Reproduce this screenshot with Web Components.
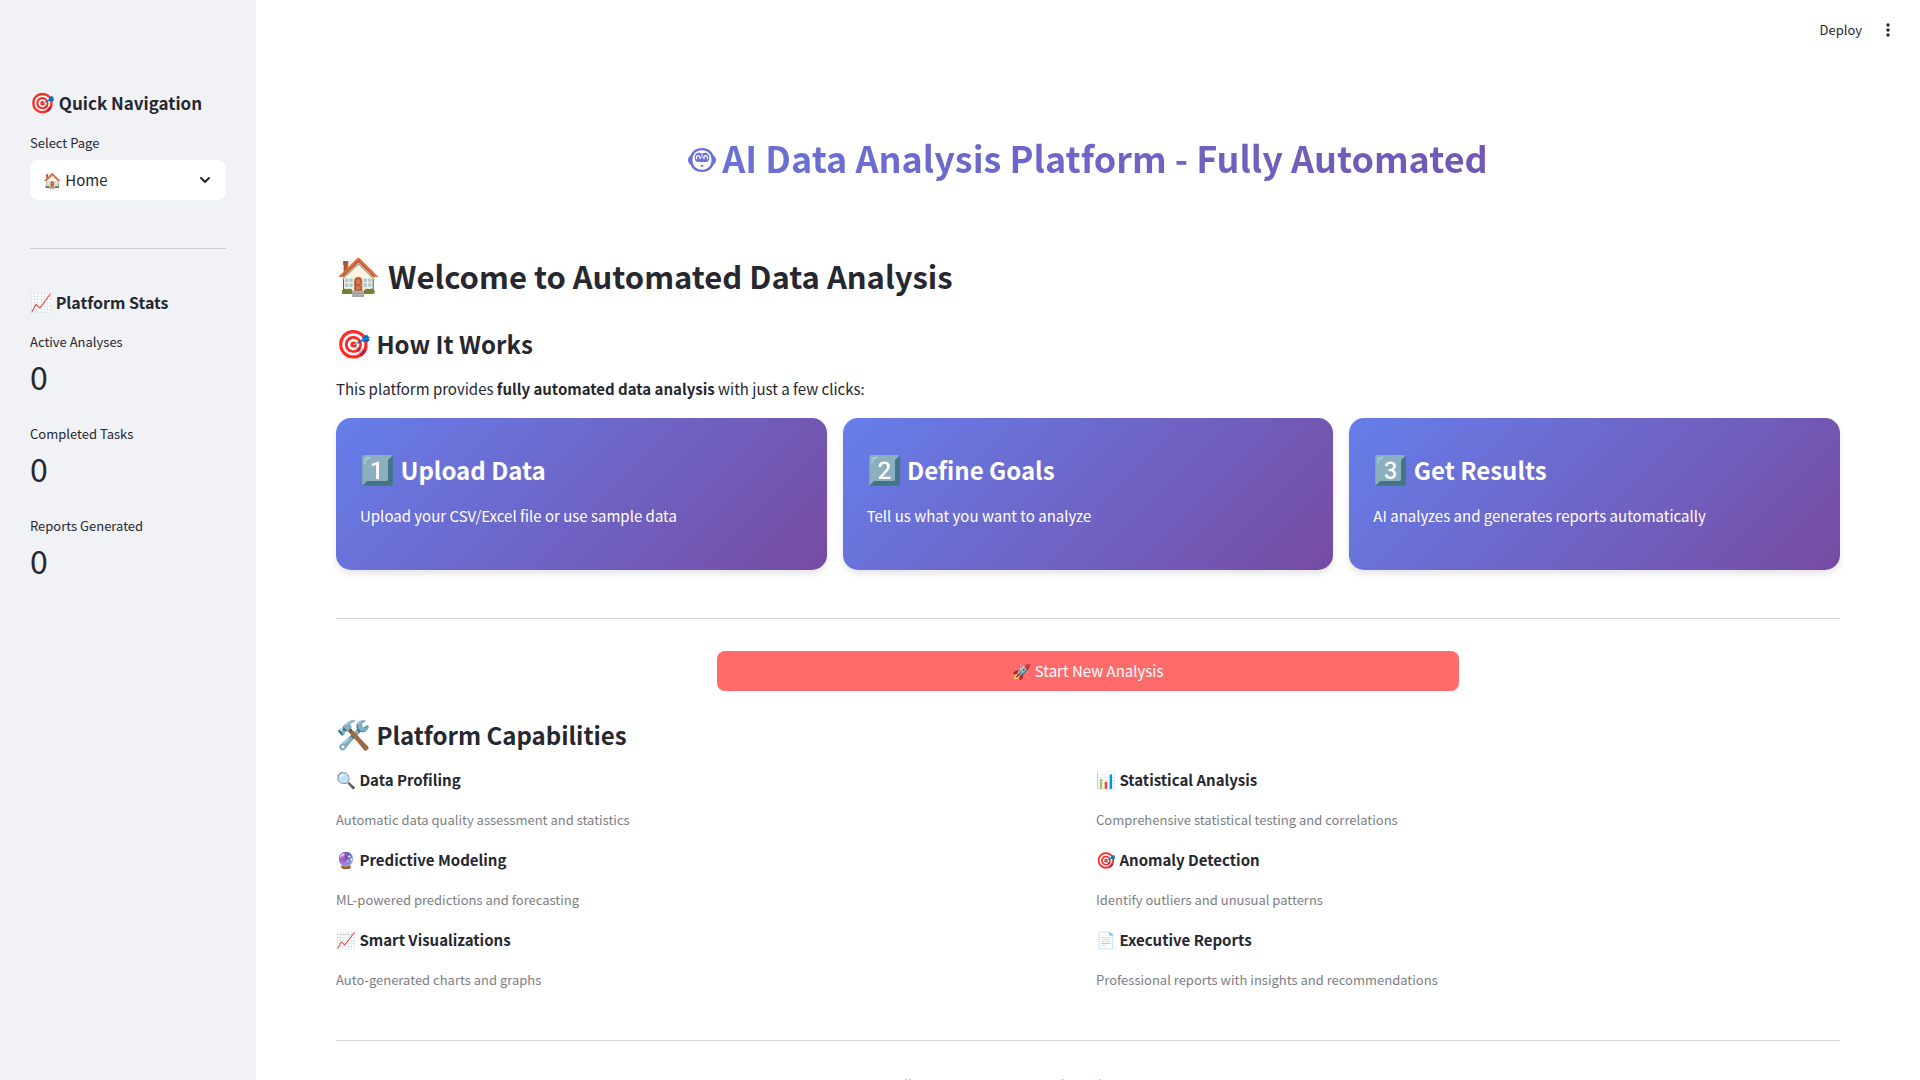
<!DOCTYPE html>
<html lang="en">
<head>
<meta charset="utf-8">
<title>AI Data Analysis Platform</title>
<style>
html, body { margin: 0; height: 100%; }
body { overflow: hidden; background: #fff; color: #262730; font-family: "Noto Sans CJK SC", sans-serif; font-size: 15px; line-height: 24px; }
</style>
</head>
<body>
<app-shell>
  <side-bar slot="side">
    <side-title icon="🎯" size="large">Quick Navigation</side-title>
    <page-picker></page-picker>
    <rule-line></rule-line>
    <side-title icon="📈">Platform Stats</side-title>
    <stat-metric label="Active Analyses">0</stat-metric>
    <stat-metric label="Completed Tasks">0</stat-metric>
    <stat-metric label="Reports Generated">0</stat-metric>
  </side-bar>
  <top-bar slot="top"></top-bar>
  <hero-title>AI Data Analysis Platform - Fully Automated</hero-title>
  <page-heading icon="🏠">Welcome to Automated Data Analysis</page-heading>
  <section-heading icon="🎯">How It Works</section-heading>
  <intro-text>This platform provides <strong>fully automated data analysis</strong> with just a few clicks:</intro-text>
  <step-row>
    <step-card icon="1️⃣" heading="Upload Data">Upload your CSV/Excel file or use sample data</step-card>
    <step-card icon="2️⃣" heading="Define Goals">Tell us what you want to analyze</step-card>
    <step-card icon="3️⃣" heading="Get Results">AI analyzes and generates reports automatically</step-card>
  </step-row>
  <rule-line></rule-line>
  <start-action></start-action>
  <section-heading icon="🛠️">Platform Capabilities</section-heading>
  <capability-grid>
    <capability-item icon="🔍" heading="Data Profiling">Automatic data quality assessment and statistics</capability-item>
    <capability-item icon="📊" heading="Statistical Analysis">Comprehensive statistical testing and correlations</capability-item>
    <capability-item icon="🔮" heading="Predictive Modeling">ML-powered predictions and forecasting</capability-item>
    <capability-item icon="🎯" heading="Anomaly Detection">Identify outliers and unusual patterns</capability-item>
    <capability-item icon="📈" heading="Smart Visualizations">Auto-generated charts and graphs</capability-item>
    <capability-item icon="📄" heading="Executive Reports">Professional reports with insights and recommendations</capability-item>
  </capability-grid>
  <rule-line></rule-line>
  <page-footer>Fully Automated AI Data Analysis Platform for Enterprise Research</page-footer>
</app-shell>
<script>
function define(name, render) {
  customElements.define(name, class extends HTMLElement {
    constructor() {
      super();
      const root = this.attachShadow({ mode: 'open' });
      const t = document.createElement('template');
      t.innerHTML = render(this);
      root.append(t.content.cloneNode(true));
    }
  });
}
const attr = (el, n) => el.getAttribute(n) || '';

define('app-shell', () => `
<style>
:host { display: flex; height: 100vh; overflow: hidden; }
.column { flex: 1; min-width: 0; display: flex; flex-direction: column; }
main { flex: 1; min-height: 0; overflow: hidden; padding: 73px 80px 0; }
</style>
<slot name="side"></slot>
<div class="column"><slot name="top"></slot><main><slot></slot></main></div>`);

define('side-bar', () => `
<style>
:host { display: block; flex: 0 0 256px; box-sizing: border-box; padding: 91px 30px 0; background: #f0f2f6; --rule: #c9cbd0; --rule-margin: 48px 0 41px; }
</style>
<slot></slot>`);

define('side-title', el => `
<style>
:host { display: block; margin-bottom: 18px; }
h3 { margin: 0; font-size: 16px; line-height: 24px; font-weight: 700; }
:host([size="large"]) h3 { font-size: 17px; }
.icon { font-size: 18px; line-height: 1px; }
:host([size="large"]) .icon { font-size: 20px; }
</style>
<h3><span class="icon">${attr(el, 'icon')}</span> <slot></slot></h3>`);

define('page-picker', () => `
<style>
:host { display: block; }
label { display: block; font-size: 13px; line-height: 20px; margin-bottom: 7px; }
.box { display: grid; align-items: center; height: 40px; }
select, svg { grid-area: 1 / 1; }
select { appearance: none; width: 100%; height: 40px; padding: 0 36px 0 13px; border: 0; border-radius: 8px; background: #fff; color: inherit; font: inherit; }
svg { justify-self: end; margin-right: 16px; pointer-events: none; }
</style>
<label for="page">Select Page</label>
<div class="box">
<select id="page"><option>🏠 Home</option></select>
<svg width="10" height="8" viewBox="0 0 10 8" fill="none" stroke="#262730" stroke-width="2" stroke-linecap="round" stroke-linejoin="round"><path d="M1 2l4 4 4-4"/></svg>
</div>`);

define('rule-line', () => `
<style>
:host { display: block; margin: var(--rule-margin, 48px 0 32px); }
hr { margin: 0; border: 0; height: 1px; background: var(--rule, #d3d3d6); }
</style>
<hr>`);

define('stat-metric', el => `
<style>
:host { display: block; margin-bottom: 28px; }
.label { font-size: 13px; line-height: 20px; margin-bottom: 4px; }
.value { font-size: 32px; line-height: 40px; }
</style>
<div class="label">${attr(el, 'label')}</div><div class="value"><slot></slot></div>`);

define('top-bar', () => `
<style>
:host { display: flex; justify-content: flex-end; align-items: center; gap: 14px; height: 60px; padding-right: 20px; }
button { border: 0; padding: 0; background: none; color: inherit; font: inherit; font-size: 13px; line-height: 20px; }
.menu { width: 24px; height: 24px; }
svg { display: block; margin: 4px auto; }
</style>
<button>Deploy</button>
<button class="menu" aria-label="Menu"><svg width="16" height="16" viewBox="0 0 16 16" fill="#262730"><circle cx="8" cy="3" r="1.700"/><circle cx="8" cy="8" r="1.700"/><circle cx="8" cy="13" r="1.700"/></svg></button>`);

define('hero-title', () => `
<style>
:host { display: block; margin-bottom: 73px; }
h1 { display: flex; justify-content: center; align-items: center; gap: 6px; margin: 0; font-size: 36px; line-height: 48px; font-weight: 700; color: transparent; background: linear-gradient(90deg, #667eea, #764ba2); -webkit-background-clip: text; background-clip: text; }
svg { margin-top: 6px; }
</style>
<h1><svg width="28" height="24" viewBox="0 0 28 24" fill="#6b70d6">
<path fill-rule="evenodd" d="M14 0C20 0 24 3 25.500 7.500C27 8.500 28 10 28 12C28 14 27 15.500 25.500 16.500C24 21 20 24 14 24C8 24 4 21 2.500 16.500C1 15.500 0 14 0 12C0 10 1 8.500 2.500 7.500C4 3 8 0 14 0ZM14 2.300C8 2.300 4.500 6.500 4.500 12C4.500 17.500 8 21.700 14 21.700C20 21.700 23.500 17.500 23.500 12C23.500 6.500 20 2.300 14 2.300Z"/>
<path d="M10.500 4.700C12 4.700 13 5 14 5.500C15 5 16 4.700 17.500 4.700C20 4.700 21.300 7 21.300 9.500C21.300 12.500 20 14 17.500 14H10.500C8 14 6.700 12.500 6.700 9.500C6.700 7 8 4.700 10.500 4.700Z"/>
<path d="M8.500 11.300V9.500C8.500 7 12 7 12 9.500V11.300M16 11.300V9.500C16 7 19.500 7 19.500 9.500V11.300" fill="none" stroke="#fff" stroke-width="1.300"/>
<path d="M14 6v4" stroke="#fff" stroke-width="1"/>
<rect x="12.500" y="17" width="3" height="1.700" rx=".8"/>
</svg><slot></slot></h1>`);

define('page-heading', el => `
<style>
:host { display: block; margin-bottom: 28px; }
h1 { margin: 0; font-size: 31px; line-height: 44px; font-weight: 700; }
.icon { font-size: 36px; line-height: 1px; }
</style>
<h1><span class="icon">${attr(el, 'icon')}</span> <slot></slot></h1>`);

define('section-heading', el => `
<style>
:host { display: block; margin-bottom: 15px; }
h2 { margin: 0; font-size: 24px; line-height: 36px; font-weight: 700; }
.icon { font-size: 28px; line-height: 1px; }
</style>
<h2><span class="icon">${attr(el, 'icon')}</span> <slot></slot></h2>`);

define('intro-text', () => `
<style>:host { display: block; margin-bottom: 17px; } p { margin: 0; }</style>
<p><slot></slot></p>`);

define('step-row', () => `
<style>:host { display: grid; grid-template-columns: repeat(3, 1fr); gap: 16px; }</style>
<slot></slot>`);

define('step-card', el => `
<style>
:host { display: block; padding: 34px 24px 42px; border-radius: 15px; color: #fff; background: linear-gradient(135deg, #667eea 0%, #764ba2 100%); box-shadow: 0 4px 6px rgba(0, 0, 0, .1); }
h2 { margin: 0 0 16px; font-size: 24px; line-height: 36px; font-weight: 700; }
.icon { font-size: 28px; line-height: 1px; }
p { margin: 0; }
</style>
<h2><span class="icon">${attr(el, 'icon')}</span> ${attr(el, 'heading')}</h2><p><slot></slot></p>`);

define('start-action', () => `
<style>
:host { display: flex; justify-content: center; margin-bottom: 26px; }
button { flex: 0 0 calc(50% - 10px); height: 40px; border: 0; border-radius: 8px; background: #ff6b6b; color: #fff; font: inherit; }
</style>
<button>🚀 Start New Analysis</button>`);

define('capability-grid', () => `
<style>:host { display: grid; grid-template-columns: 1fr 1fr; gap: 16px; }</style>
<slot></slot>`);

define('capability-item', el => `
<style>
:host { display: grid; gap: 16px; }
h3, p { margin: 0; line-height: 24px; }
h3 { font-size: 15px; font-weight: 700; }
.icon { font-size: 16px; line-height: 1px; }
p { font-size: 13px; color: #7d7e84; }
</style>
<h3><span class="icon">${attr(el, 'icon')}</span> ${attr(el, 'heading')}</h3><p><slot></slot></p>`);

define('page-footer', () => `
<style>
:host { display: block; text-align: center; color: #666; }
p { margin: 0; font-size: 13px; line-height: 24px; }
</style>
<p><slot></slot></p>`);
</script>
</body>
</html>
